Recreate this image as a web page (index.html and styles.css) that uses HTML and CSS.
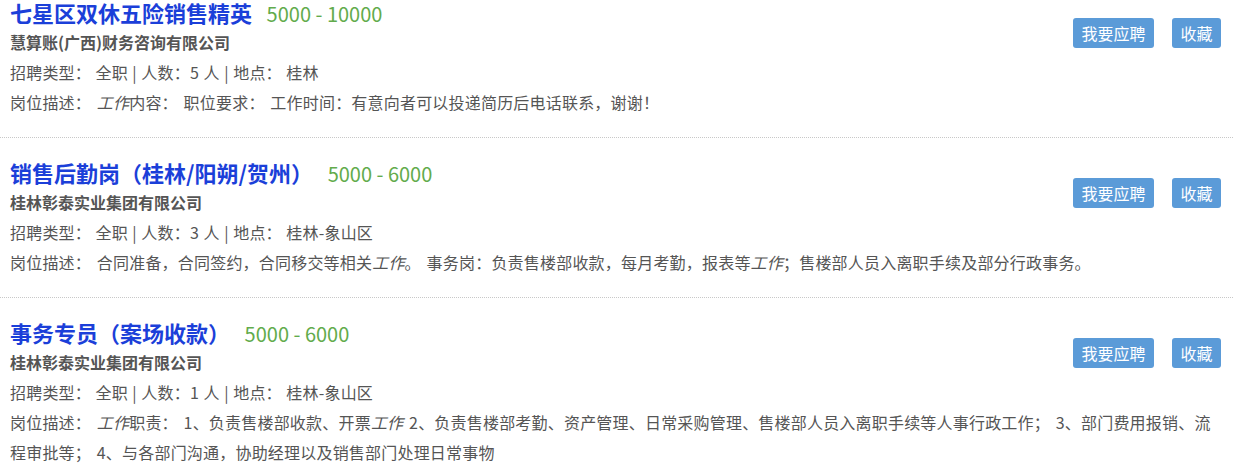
FILE: index.html
```html
<!DOCTYPE html>
<html lang="zh-CN">
<head>
    <meta charset="UTF-8">
    <title>职位列表</title>
    <link rel="stylesheet" href="styles.css">
</head>
<body>
    <div class="job-list">
        <div class="job">
            <div class="actions">
                <a class="btn" href="#">我要应聘</a>
                <a class="btn" href="#">收藏</a>
            </div>
            <div class="title-line">
                <a class="job-title" href="#">七星区双休五险销售精英</a>
                <span class="salary">5000 - 10000</span>
            </div>
            <div class="company">慧算账(广西)财务咨询有限公司</div>
            <div class="info">招聘类型：&nbsp;全职 | 人数：5 人 | 地点：&nbsp;桂林</div>
            <div class="desc">岗位描述：&nbsp;<i>工作</i>内容：&nbsp;职位要求：&nbsp;工作时间：有意向者可以投递简历后电话联系，谢谢！</div>
        </div>

        <div class="job">
            <div class="actions">
                <a class="btn" href="#">我要应聘</a>
                <a class="btn" href="#">收藏</a>
            </div>
            <div class="title-line">
                <a class="job-title" href="#">销售后勤岗（桂林/阳朔/贺州）</a>
                <span class="salary">5000 - 6000</span>
            </div>
            <div class="company">桂林彰泰实业集团有限公司</div>
            <div class="info">招聘类型：&nbsp;全职 | 人数：3 人 | 地点：&nbsp;桂林-象山区</div>
            <div class="desc">岗位描述：&nbsp;合同准备，合同签约，合同移交等相关<i>工作</i>。&nbsp;事务岗：负责售楼部收款，每月考勤，报表等<i>工作</i>；售楼部人员入离职手续及部分行政事务。</div>
        </div>

        <div class="job">
            <div class="actions">
                <a class="btn" href="#">我要应聘</a>
                <a class="btn" href="#">收藏</a>
            </div>
            <div class="title-line">
                <a class="job-title" href="#">事务专员（案场收款）</a>
                <span class="salary">5000 - 6000</span>
            </div>
            <div class="company">桂林彰泰实业集团有限公司</div>
            <div class="info">招聘类型：&nbsp;全职 | 人数：1 人 | 地点：&nbsp;桂林-象山区</div>
            <div class="desc">岗位描述：&nbsp;<i>工作</i>职责：&nbsp;1、负责售楼部收款、开票<i>工作</i> 2、负责售楼部考勤、资产管理、日常采购管理、售楼部人员入离职手续等人事行政工作；&nbsp;3、部门费用报销、流程审批等；&nbsp;4、与各部门沟通，协助经理以及销售部门处理日常事物</div>
        </div>
    </div>
</body>
</html>
```

FILE: styles.css
```css
body {
    margin: 0;
    font-family: "Noto Sans CJK SC", "Noto Sans", sans-serif;
    font-size: 16px;
    color: #555;
    background: #fff;
}
.job-list {
    margin-top: -3px;
}
.job {
    padding: 19px 10px 20px;
    border-bottom: 1px dotted #c8c8c8;
    line-height: 30px;
}
.job:first-child {
    padding-top: 0;
}
.actions {
    float: right;
    display: flex;
    gap: 18px;
    margin-top: 21px;
    margin-right: 2px;
}
.btn {
    display: block;
    height: 30px;
    line-height: 30px;
    padding: 0 8.5px;
    background: #5b9bd8;
    color: #fff;
    border-radius: 3px;
    text-decoration: none;
    font-size: 16px;
}
.title-line {
    height: 30px;
    white-space: nowrap;
}
.job-title {
    font-size: 22px;
    font-weight: bold;
    color: #1b3fd9;
    text-decoration: none;
}
.salary {
    margin-left: 11px;
    font-size: 20px;
    color: #62ab4c;
}
.company {
    font-weight: bold;
}
.info {
    word-spacing: 0.7px;
    letter-spacing: 0.2px;
}
.desc {
    word-spacing: 2px;
    letter-spacing: 0.2px;
}
.desc i {
    font-style: italic;
}
```
